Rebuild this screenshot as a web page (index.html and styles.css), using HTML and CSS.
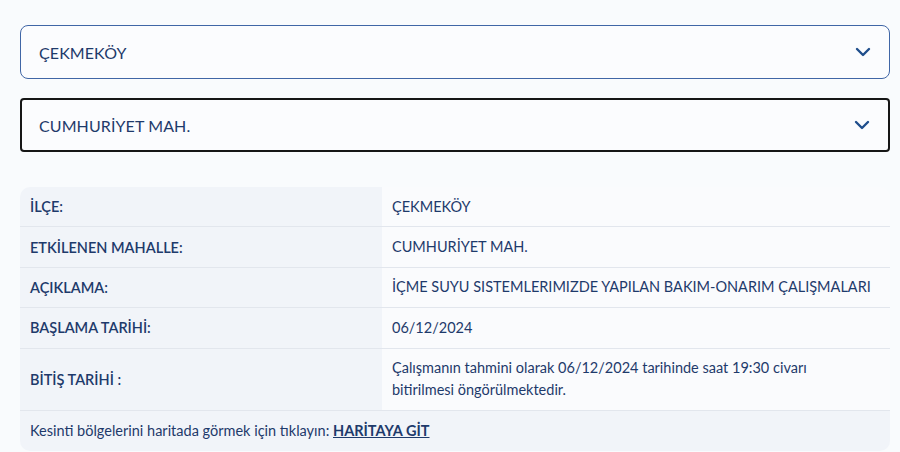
FILE: index.html
```html
<!DOCTYPE html>
<html lang="tr">
  <head>
    <meta charset="UTF-8" />
    <meta name="viewport" content="width=device-width, initial-scale=1.0" />
    <title>Su Kesintileri</title>
    <link rel="stylesheet" href="styles.css">
  </head>
  <body>
    <div class="container">
      <div class="select-box ilce">
        <span>ÇEKMEKÖY</span>
        <svg class="chevron" width="16" height="10" viewBox="0 0 16 10">
          <path d="M2 2 L8 8 L14 2" fill="none" stroke="#1f4e8c" stroke-width="2.4" stroke-linecap="round" stroke-linejoin="round" />
        </svg>
      </div>
      <div class="select-box mahalle">
        <span>CUMHURİYET MAH.</span>
        <svg class="chevron" width="16" height="10" viewBox="0 0 16 10">
          <path d="M2 2 L8 8 L14 2" fill="none" stroke="#1f4e8c" stroke-width="2.4" stroke-linecap="round" stroke-linejoin="round" />
        </svg>
      </div>

      <table class="info-table">
        <tr>
          <th>İLÇE:</th>
          <td>ÇEKMEKÖY</td>
        </tr>
        <tr>
          <th>ETKİLENEN MAHALLE:</th>
          <td>CUMHURİYET MAH.</td>
        </tr>
        <tr>
          <th>AÇIKLAMA:</th>
          <td>İÇME SUYU SISTEMLERIMIZDE YAPILAN BAKIM-ONARIM ÇALIŞMALARI</td>
        </tr>
        <tr>
          <th>BAŞLAMA TARİHİ:</th>
          <td>06/12/2024</td>
        </tr>
        <tr class="tall">
          <th>BİTİŞ TARİHİ :</th>
          <td>Çalışmanın tahmini olarak 06/12/2024 tarihinde saat 19:30 civarı bitirilmesi öngörülmektedir.</td>
        </tr>
        <tr class="footer-row">
          <td colspan="2">Kesinti bölgelerini haritada görmek için tıklayın: <a href="#">HARİTAYA GİT</a></td>
        </tr>
      </table>
    </div>
  </body>
</html>
```

FILE: styles.css
```css
/* CSS styles */
body {
  font-family: Lato, "Open Sans", sans-serif;
  margin: 0;
  padding: 0;
  background-color: #f9fbfd;
  color: #1e3a6b;
}

.container {
  padding: 25px 10px 0 20px;
}

.select-box {
  display: flex;
  align-items: center;
  justify-content: space-between;
  height: 54px;
  box-sizing: border-box;
  padding: 0 18px 0 18px;
  font-size: 16px;
  background-color: #fbfcfe;
}

.select-box span {
  letter-spacing: 0.1px;
}

.ilce {
  border: 1px solid #4066a6;
  border-radius: 8px;
  margin-bottom: 19px;
}

.mahalle {
  border: 2px solid #161616;
  border-radius: 4px;
  padding-left: 17px;
}

.chevron {
  display: block;
}

.info-table {
  width: 100%;
  margin-top: 35px;
  border-collapse: separate;
  border-spacing: 0;
  border-radius: 10px;
  overflow: hidden;
  font-size: 14.5px;
}

.info-table th,
.info-table td {
  text-align: left;
  padding: 0 4px 0 10px;
  height: 39.4px;
  border-bottom: 1px solid #e2e6ed;
}

.info-table th {
  width: 348px;
  font-weight: 600;
  background-color: #f1f4f9;
}

.info-table td {
  font-weight: 400;
  background-color: #fafbfd;
  line-height: 22px;
}

.info-table tr.tall td,
.info-table tr.tall th {
  height: 61px;
}

.info-table tr.tall td {
  padding-right: 50px;
}

.info-table tr.footer-row td {
  background-color: #f1f4f9;
  border-bottom: none;
  height: 40px;
}

a {
  color: #1e3a6b;
  font-weight: 700;
}
```
